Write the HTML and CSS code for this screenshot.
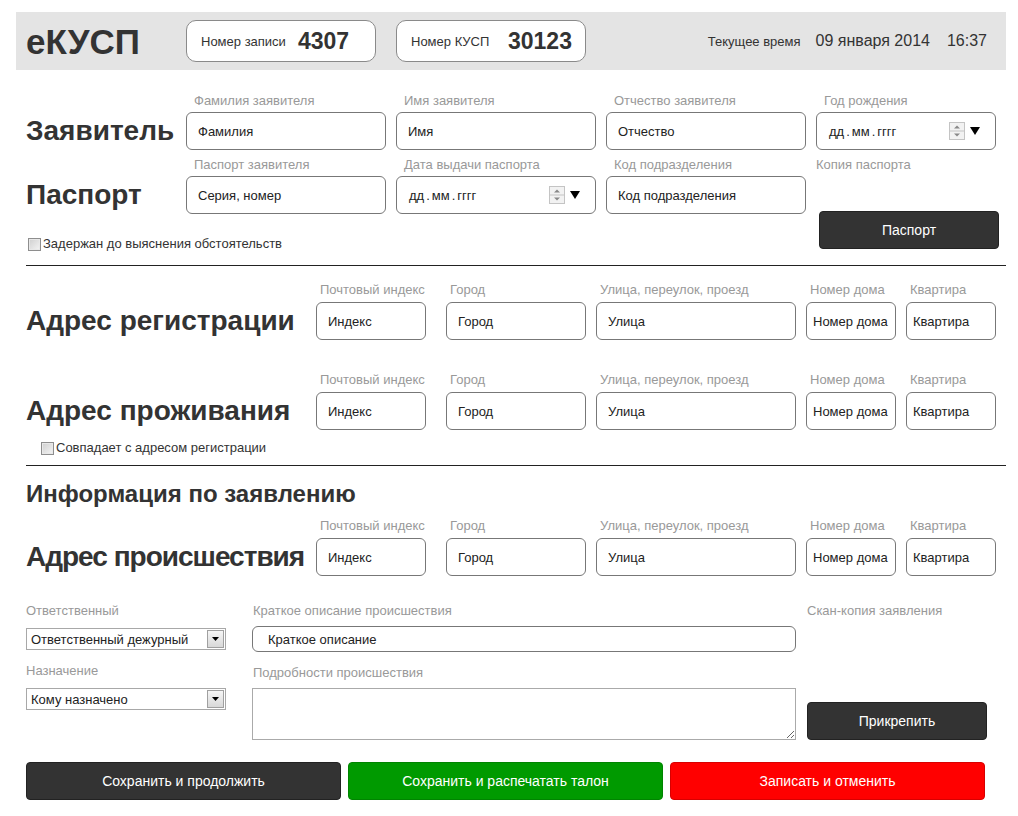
FILE: index.html
```html
<!DOCTYPE html>
<html lang="ru">
<head>
    <meta charset="UTF-8">
    <title>еКУСП</title>
    <link rel="stylesheet" href="styles.css">
</head>
<body>
    <header class="topbar">
        <div class="logo">еКУСП</div>
        <div class="counter"><span class="counter-label">Номер записи</span><span class="counter-value">4307</span></div>
        <div class="counter"><span class="counter-label">Номер КУСП</span><span class="counter-value">30123</span></div>
        <div class="clock">
            <span class="clock-label">Текущее время</span>
            <span class="clock-date">09 января 2014</span>
            <span class="clock-time">16:37</span>
        </div>
    </header>

    <main class="form">
        <section class="person">
            <h2 class="row-title">Заявитель</h2>
            <div class="field"><label>Фамилия заявителя</label><input class="text" value="Фамилия"></div>
            <div class="field"><label>Имя заявителя</label><input class="text" value="Имя"></div>
            <div class="field"><label>Отчество заявителя</label><input class="text" value="Отчество"></div>
            <div class="field">
                <label>Год рождения</label>
                <div class="text date">
                    <span class="date-mask">дд<i>.</i>мм<i>.</i>гггг</span>
                    <svg class="spin" width="16" height="18" viewBox="0 0 16 18"><rect x="0.5" y="0.5" width="15" height="17" fill="#f2f2f2" stroke="#c4c4c4"/><line x1="1" y1="9" x2="15" y2="9" stroke="#c4c4c4"/><path d="M5 6.5 L8 3.5 L11 6.5 Z" fill="#888"/><path d="M5 11.5 L8 14.5 L11 11.5 Z" fill="#888"/></svg>
                    <svg class="drop" width="10" height="8" viewBox="0 0 10 8"><path d="M0 0 H10 L5 8 Z" fill="#000"/></svg>
                </div>
            </div>

            <h2 class="row-title">Паспорт</h2>
            <div class="field"><label>Паспорт заявителя</label><input class="text" value="Серия, номер"></div>
            <div class="field">
                <label>Дата выдачи паспорта</label>
                <div class="text date">
                    <span class="date-mask">дд<i>.</i>мм<i>.</i>гггг</span>
                    <svg class="spin" width="16" height="18" viewBox="0 0 16 18"><rect x="0.5" y="0.5" width="15" height="17" fill="#f2f2f2" stroke="#c4c4c4"/><line x1="1" y1="9" x2="15" y2="9" stroke="#c4c4c4"/><path d="M5 6.5 L8 3.5 L11 6.5 Z" fill="#888"/><path d="M5 11.5 L8 14.5 L11 11.5 Z" fill="#888"/></svg>
                    <svg class="drop" width="10" height="8" viewBox="0 0 10 8"><path d="M0 0 H10 L5 8 Z" fill="#000"/></svg>
                </div>
            </div>
            <div class="field"><label>Код подразделения</label><input class="text" value="Код подразделения"></div>
            <div class="field scan">
                <label>Копия паспорта</label>
                <button class="btn btn-dark btn-passport">Паспорт</button>
            </div>

            <label class="check check-detained"><input type="checkbox">Задержан до выяснения обстоятельств</label>
        </section>

        <hr class="divider">

        <section class="address address-first">
            <h2 class="row-title">Адрес регистрации</h2>
            <div class="field field-index"><label>Почтовый индекс</label><input class="text" value="Индекс"></div>
            <div class="field"><label>Город</label><input class="text" value="Город"></div>
            <div class="field"><label>Улица, переулок, проезд</label><input class="text" value="Улица"></div>
            <div class="field"><label>Номер дома</label><input class="text narrow" value="Номер дома"></div>
            <div class="field"><label>Квартира</label><input class="text narrow" value="Квартира"></div>
        </section>

        <section class="address address-next">
            <h2 class="row-title">Адрес проживания</h2>
            <div class="field field-index"><label>Почтовый индекс</label><input class="text" value="Индекс"></div>
            <div class="field"><label>Город</label><input class="text" value="Город"></div>
            <div class="field"><label>Улица, переулок, проезд</label><input class="text" value="Улица"></div>
            <div class="field"><label>Номер дома</label><input class="text narrow" value="Номер дома"></div>
            <div class="field"><label>Квартира</label><input class="text narrow" value="Квартира"></div>
        </section>
        <label class="check check-same"><input type="checkbox">Совпадает с адресом регистрации</label>

        <hr class="divider divider-second">

        <h2 class="section-title">Информация по заявлению</h2>

        <section class="address address-incident">
            <h2 class="row-title tight">Адрес происшествия</h2>
            <div class="field field-index"><label>Почтовый индекс</label><input class="text" value="Индекс"></div>
            <div class="field"><label>Город</label><input class="text" value="Город"></div>
            <div class="field"><label>Улица, переулок, проезд</label><input class="text" value="Улица"></div>
            <div class="field"><label>Номер дома</label><input class="text narrow" value="Номер дома"></div>
            <div class="field"><label>Квартира</label><input class="text narrow" value="Квартира"></div>
        </section>

        <section class="details">
            <div class="col-left">
                <label class="small-label">Ответственный</label>
                <span class="select-wrap">
                    <select class="select"><option>Ответственный дежурный</option></select>
                    <span class="select-arrow"><svg width="7" height="4" viewBox="0 0 7 4"><path d="M0 0 H7 L3.5 4 Z" fill="#000"/></svg></span>
                </span>
                <label class="small-label second">Назначение</label>
                <span class="select-wrap">
                    <select class="select"><option>Кому назначено</option></select>
                    <span class="select-arrow"><svg width="7" height="4" viewBox="0 0 7 4"><path d="M0 0 H7 L3.5 4 Z" fill="#000"/></svg></span>
                </span>
            </div>
            <div class="col-mid">
                <label class="small-label">Краткое описание происшествия</label>
                <input class="brief" value="Краткое описание">
                <label class="small-label second">Подробности происшествия</label>
                <textarea class="notes"></textarea>
            </div>
            <div class="col-right">
                <label class="small-label">Скан-копия заявления</label>
                <button class="btn btn-dark btn-attach">Прикрепить</button>
            </div>
        </section>

        <div class="actions">
            <button class="btn btn-dark">Сохранить и продолжить</button>
            <button class="btn btn-green">Сохранить и распечатать талон</button>
            <button class="btn btn-red">Записать и отменить</button>
        </div>
    </main>
</body>
</html>
```

FILE: styles.css
```css
body {
    margin: 0;
    font-family: "Liberation Sans", Arial, sans-serif;
    color: #333;
    background: #fff;
}
.topbar {
    display: flex;
    align-items: center;
    width: 990px;
    height: 58px;
    margin: 12px 0 0 16px;
    padding-left: 10px;
    box-sizing: border-box;
    background: #e4e4e4;
}
.logo {
    width: 160px;
    padding-top: 2px;
    font-size: 35px;
    font-weight: bold;
    color: #333;
}
.counter {
    display: flex;
    align-items: center;
    width: 190px;
    height: 42px;
    margin-right: 20px;
    padding-left: 14px;
    box-sizing: border-box;
    background: #fff;
    border: 1px solid #8a8a8a;
    border-radius: 10px;
}
.counter-label { width: 97px; font-size: 13px; color: #333; }
.counter-value { font-size: 23px; font-weight: bold; color: #333; }
.clock {
    display: flex;
    align-items: center;
    margin-left: auto;
    margin-right: 19px;
}
.clock-label { font-size: 13px; margin-right: 15px; }
.clock-date { font-size: 16px; margin-right: 17px; }
.clock-time { font-size: 16px; }

.form {
    width: 980px;
    margin-left: 26px;
}
.row-title {
    margin: 0;
    align-self: end;
    height: 38px;
    line-height: 38px;
    font-size: 28px;
    font-weight: bold;
    white-space: nowrap;
    color: #333;
}
.row-title.tight { letter-spacing: -1px; }
.field label,
.small-label {
    display: block;
    font-size: 13px;
    line-height: 16px;
    color: #999;
    margin-bottom: 3px;
    white-space: nowrap;
}
.person .field label { padding-left: 8px; }
.person .scan label { padding-left: 0; }
.address .field label { padding-left: 4px; margin-bottom: 4px; }
.text {
    display: block;
    width: 100%;
    height: 38px;
    box-sizing: border-box;
    padding: 0 11px;
    border: 1px solid #777;
    border-radius: 6px;
    background: #fff;
    font: 13px "Liberation Sans", Arial, sans-serif;
    color: #222;
}
.text.narrow { padding: 0 0 0 6px; }
.date {
    display: flex;
    align-items: center;
}
.date-mask { flex: 1; padding-left: 1px; }
.date-mask i { font-style: normal; margin: 0 2px; }
.spin { margin-right: 5px; }
.drop { margin-right: 4px; }

.person {
    display: grid;
    grid-template-columns: 150px 200px 200px 200px 180px;
    column-gap: 10px;
    row-gap: 7px;
    margin-top: 23px;
}
.scan { grid-column: 5; grid-row: 2 / span 2; }
.btn-passport {
    width: 180px;
    margin: 38px 0 0 3px;
}
.check {
    display: flex;
    align-items: center;
    font-size: 13px;
    line-height: 16px;
    color: #333;
}
.check input {
    appearance: none;
    width: 13px;
    height: 13px;
    margin: 0 2px 0 0;
    box-sizing: border-box;
    border: 1px solid #8e8e8e;
    background: linear-gradient(135deg, #cfcfcf, #f4f4f4);
    box-shadow: inset 0 0 0 1px #e8e8e8;
}
.check-detained {
    grid-column: 1 / 5;
    grid-row: 3;
    padding-top: 15px;
    margin-left: 2px;
}
.divider {
    border: 0;
    border-top: 1px solid #222;
    margin: 13px 0 0;
}
.address {
    display: grid;
    grid-template-columns: 280px 120px 140px 200px 90px 90px;
    column-gap: 10px;
}
.address-first { margin-top: 16px; }
.address-next { margin-top: 32px; }
.address-incident { margin-top: 10px; }
.field-index .text { width: 110px; }
.check-same { margin: 10px 0 0 15px; }
.divider-second { margin-top: 9px; }
.section-title {
    margin: 14px 0 0;
    font-size: 24px;
    line-height: 28px;
    font-weight: bold;
    color: #333;
}

.details {
    display: flex;
    margin-top: 27px;
}
.col-left { width: 200px; }
.col-mid { width: 544px; margin-left: 26px; }
.col-right { width: 180px; margin-left: 11px; }
.col-left .small-label { margin-bottom: 9px; }
.col-mid .small-label { margin-bottom: 7px; padding-left: 1px; }
.small-label.second { margin-top: 13px; }
.select-wrap {
    position: relative;
    display: block;
    width: 200px;
}
.select {
    display: block;
    width: 200px;
    height: 22px;
    padding: 0 0 0 4px;
    appearance: none;
    border: 1px solid #a8a8a8;
    border-radius: 0;
    background: #fff;
    font: 13px "Liberation Sans", Arial, sans-serif;
    color: #222;
}
.select-arrow {
    position: absolute;
    top: 2px;
    right: 2px;
    width: 17px;
    height: 18px;
    box-sizing: border-box;
    display: flex;
    align-items: center;
    justify-content: center;
    border: 1px solid #a0a0a0;
    background: linear-gradient(#f6f6f6, #d8d8d8);
}
.brief {
    display: block;
    width: 544px;
    height: 26px;
    box-sizing: border-box;
    padding: 0 15px;
    border: 1px solid #777;
    border-radius: 6px;
    font: 13px "Liberation Sans", Arial, sans-serif;
    color: #222;
}
.notes {
    display: block;
    width: 544px;
    height: 52px;
    box-sizing: border-box;
    margin: 0;
    border: 1px solid #aaa;
    border-radius: 0;
}
.btn-attach {
    width: 180px;
    margin-top: 83px;
}

.btn {
    display: block;
    height: 38px;
    border-radius: 4px;
    font: 14px "Liberation Sans", Arial, sans-serif;
    color: #fff;
    cursor: pointer;
}
.btn-dark { background: #333; border: 1px solid #222; }
.btn-green { background: #009a00; border: 1px solid #008400; }
.btn-red { background: #ff0000; border: 1px solid #d80000; }
.actions {
    display: grid;
    grid-template-columns: repeat(3, 315px);
    column-gap: 7px;
    margin-top: 22px;
}
.actions .btn { width: 100%; }
```
